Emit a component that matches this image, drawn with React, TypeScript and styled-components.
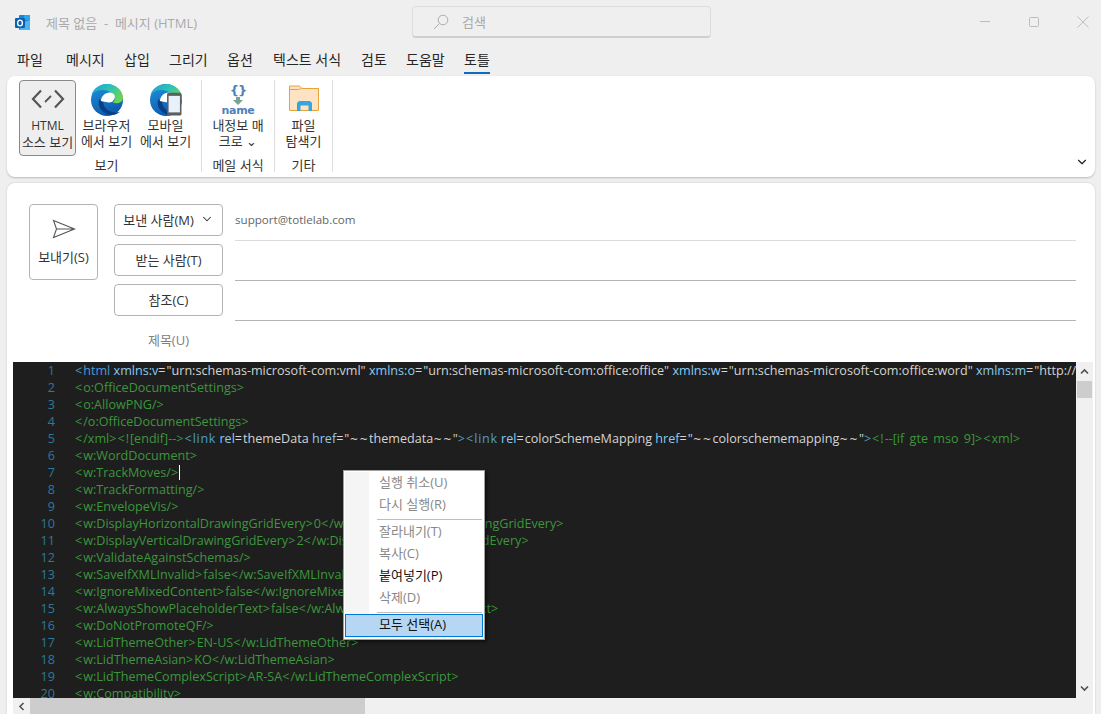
import React from 'react'
import styled, { createGlobalStyle } from 'styled-components'
import { ChevronDown } from 'lucide-react'

const GlobalStyle = createGlobalStyle`
    html, body {
        margin: 0;
        padding: 0;
        height: 100%;
        overflow: hidden;
    }
    * {
        box-sizing: border-box;
    }
`

const uiFont = `"Open Sans", "Noto Sans CJK KR", sans-serif`

const Page = styled.div`
    width: 1101px;
    height: 714px;
    background: #efefef;
    overflow: hidden;
    font-family: ${uiFont};
    font-size: 13px;
    color: #333;
    display: flex;
    flex-direction: column;
`

const TitleBar = styled.div`
    height: 44px;
    flex: none;
    display: grid;
    grid-template-columns: 397px 299px 1fr;
    padding-left: 15px;
    align-items: center;
`

const TitleLeft = styled.div`
    display: flex;
    align-items: center;
    gap: 15px;
    color: #aaa;
    font-size: 13px;
`

const SearchBox = styled.div`
    height: 32px;
    border: 1px solid #dcdcdc;
    border-bottom: 2px solid #cfcfcf;
    border-radius: 4px;
    display: flex;
    align-items: center;
    gap: 13px;
    padding-left: 20px;
    color: #aaa;
    font-size: 13px;
`

const WindowControls = styled.div`
    display: flex;
    justify-content: flex-end;
    gap: 37px;
    padding-right: 12px;
`

const TabBar = styled.div`
    height: 32px;
    flex: none;
    display: flex;
    padding-left: 17px;
    align-items: flex-start;
    padding-top: 6px;
    font-size: 14px;
`

const Tab = styled.div<{ $width: number; $active?: boolean }>`
    width: ${props => props.$width}px;
    flex: none;
    white-space: nowrap;
    color: #262626;

    & span {
        display: inline-block;
        height: 24px;
        line-height: 19px;
        border-bottom: ${props => props.$active ? '2px solid #0f6cbd' : 'none'};
    }
`

const Ribbon = styled.div`
    height: 101px;
    flex: none;
    margin: 0 6px 0 7px;
    background: #fff;
    border-radius: 8px;
    box-shadow: 0 1px 2px rgba(0, 0, 0, .22);
    display: flex;
    padding: 4px 6px 5px 5px;
`

const RibbonGroup = styled.div<{ $width: number }>`
    width: ${props => props.$width}px;
    flex: none;
    border-right: 1px solid #dedede;
    display: flex;
    flex-direction: column;
    align-items: center;
`

const GroupButtons = styled.div`
    display: flex;
    gap: 2px;
    height: 76px;
`

const GroupLabel = styled.div`
    font-size: 13px;
    line-height: 17px;
    margin-top: 1px;
    color: #333;
`

const RibbonButton = styled.div<{ $pressed?: boolean }>`
    width: 57px;
    height: 76px;
    border-radius: 4px;
    border: 1px solid ${props => props.$pressed ? '#8a8a8a' : 'transparent'};
    background: ${props => props.$pressed ? '#eeeeee' : 'transparent'};
    display: flex;
    flex-direction: column;
    align-items: center;
    padding-top: 3px;
`

const IconSlot = styled.div`
    height: 32px;
    display: flex;
    align-items: center;
    justify-content: center;
`

const RibbonText = styled.div`
    font-size: 13px;
    line-height: 16px;
    margin-top: 1px;
    text-align: center;
    white-space: nowrap;
    color: #333;
`

const LatinLabel = styled.span`
    font-size: 12px;
`

const NameIcon = styled.div`
    display: flex;
    flex-direction: column;
    align-items: center;
    color: #4f81bd;
    font-family: "DejaVu Sans", sans-serif;
    font-weight: bold;
    line-height: 1;
`

const Braces = styled.span`
    font-size: 13px;
    height: 13px;
    letter-spacing: -1px;
`

const NameText = styled.span`
    font-size: 11px;
    height: 11px;
    letter-spacing: -.3px;
`

const CollapseButton = styled.div`
    margin-left: auto;
    align-self: flex-end;
    margin-bottom: 3px;
    color: #222;
    display: flex;
`

const Card = styled.div`
    flex: 1;
    min-height: 0;
    margin: 6px 6px 0 7px;
    background: #fff;
    border-radius: 8px 8px 0 0;
    box-shadow: 0 0 2px rgba(0, 0, 0, .18);
    display: flex;
    flex-direction: column;
`

const Compose = styled.div`
    height: 179px;
    flex: none;
    display: flex;
    padding: 21px 19px 0 22px;
`

const SendButton = styled.div`
    width: 69px;
    height: 76px;
    flex: none;
    border: 1px solid #b4b4b4;
    border-radius: 4px;
    display: flex;
    flex-direction: column;
    align-items: center;
    padding-top: 14px;
    gap: 8px;
    margin-right: 16px;
`

const Fields = styled.div`
    flex: 1;
    display: flex;
    flex-direction: column;
    gap: 3px;
`

const FieldRow = styled.div`
    display: flex;
    height: 37px;
    flex: none;
    gap: 12px;
`

const AddressButton = styled.div`
    width: 109px;
    height: 32px;
    flex: none;
    border: 1px solid #b4b4b4;
    border-radius: 4px;
    display: flex;
    align-items: center;
    justify-content: center;
    gap: 6px;
    padding-bottom: 2px;
    color: #333;
`

const SubjectLabel = styled.div`
    width: 109px;
    height: 32px;
    flex: none;
    display: flex;
    align-items: center;
    justify-content: center;
    padding-bottom: 2px;
    color: #808080;
`

const AddressInput = styled.div<{ $strong?: boolean }>`
    flex: 1;
    border-bottom: 1px solid ${props => props.$strong ? '#b4b4b4' : '#dcdcdc'};
    font-size: 11.6px;
    line-height: 31px;
    color: #666;
`

const EditorFrame = styled.div`
    flex: 1;
    min-height: 0;
    margin: 0 2px 0 6px;
    display: grid;
    grid-template-columns: 1fr 17px;
    grid-template-rows: 1fr 16px;
    position: relative;
    overflow: hidden;
`

const Editor = styled.div`
    background: #1e1e1e;
    overflow: hidden;
    font-family: "Open Sans", sans-serif;
    font-size: 12.6px;
    min-width: 0;
`

const CodeLine = styled.div`
    display: flex;
    height: 17px;
    line-height: 17px;
    white-space: pre;
`

const LineNo = styled.div`
    width: 42px;
    flex: none;
    margin-right: 20px;
    text-align: right;
    color: #2b7a9b;
`

const tokenColors = {
    green: '#3c963c',
    bracket: '#569cb4',
    tag: '#4b9bd6',
    link: '#4b9bd6',
    attr: '#8ccbf0',
    text: '#d4d4d4',
}

const Token = styled.span<{ $kind: keyof typeof tokenColors }>`
    color: ${props => tokenColors[props.$kind]};
    letter-spacing: ${props => props.$kind === 'link' ? '.7px' : 'normal'};
    word-spacing: ${props => props.$kind === 'green' ? '2px' : 'normal'};
`

const Sym = styled.span`
    letter-spacing: 1px;
`

const Tilde = styled.span`
    font-family: "DejaVu Sans", sans-serif;
    font-size: 10.5px;
    letter-spacing: 1px;
`

const Caret = styled.span`
    display: inline-block;
    width: 1px;
    height: 15px;
    background: #fff;
    margin-top: 1px;
    vertical-align: top;
`

const VScroll = styled.div`
    background: #f0f0f0;
    display: flex;
    flex-direction: column;
    align-items: center;
    color: #505050;
    padding-top: 2px;
`

const VThumb = styled.div`
    width: 15px;
    height: 17px;
    margin-top: 3px;
    background: #cdcdcd;
`

const ArrowSlot = styled.div`
    height: 14px;
    display: flex;
    align-items: center;
    justify-content: center;
`

const VEnd = styled.div`
    margin-top: auto;
    padding-bottom: 2px;
`

const HScroll = styled.div`
    background: #f0f0f0;
    display: flex;
    align-items: center;
    color: #505050;
    grid-column: 1 / 3;
`

const HArrow = styled.div`
    width: 17px;
    display: flex;
    justify-content: center;
`

const HThumb = styled.div`
    width: 335px;
    height: 16px;
    background: #cdcdcd;
`

const Menu = styled.div`
    position: absolute;
    left: 330px;
    top: 108px;
    width: 142px;
    height: 170px;
    background: #fff;
    border: 1px solid #a0a0a0;
    box-shadow: 2px 2px 3px rgba(0, 0, 0, .5);
    padding: 1px;
    display: flex;
    flex-direction: column;
    background-image: linear-gradient(to right, #f5f5f5 24px, #fff 24px);
    background-origin: content-box;
    background-repeat: no-repeat;
`

const MenuItem = styled.div<{ $state?: 'disabled' | 'active' | 'selected' }>`
    height: ${props => props.$state === 'selected' ? '23px' : '22px'};
    line-height: ${props => props.$state === 'selected' ? '21px' : '20px'};
    flex: none;
    padding-left: 34px;
    color: ${props => props.$state === 'disabled' ? '#888' : '#111'};
    background: ${props => props.$state === 'selected' ? '#b5d7f3' : 'transparent'};
    outline: ${props => props.$state === 'selected' ? '1px solid #0078d4' : 'none'};
    outline-offset: -1px;
`

const MenuSep = styled.div<{ $after: number }>`
    height: 1px;
    flex: none;
    background: #bdbdbd;
    margin: 3px 1px ${props => props.$after}px 32px;
`

type Segment = { kind: keyof typeof tokenColors; text: string }

const green = (text: string): Segment[] => [{ kind: 'green', text }]

const attr = (name: string, value: string): Segment[] => [
    { kind: 'attr', text: ' ' + name },
    { kind: 'text', text: '=' + value },
]

const codeLines: Segment[][] = [
    [
        { kind: 'bracket', text: '<' },
        { kind: 'tag', text: 'html' },
        ...attr('xmlns:v', '"urn:schemas-microsoft-com:vml"'),
        ...attr('xmlns:o', '"urn:schemas-microsoft-com:office:office"'),
        ...attr('xmlns:w', '"urn:schemas-microsoft-com:office:word"'),
        ...attr('xmlns:m', '"http://'),
    ],
    green('<o:OfficeDocumentSettings>'),
    green('<o:AllowPNG/>'),
    green('</o:OfficeDocumentSettings>'),
    [
        { kind: 'green', text: '</xml><![endif]-->' },
        { kind: 'bracket', text: '<' },
        { kind: 'link', text: 'link' },
        ...attr('rel', 'themeData'),
        ...attr('href', '"~~themedata~~"'),
        { kind: 'bracket', text: '><' },
        { kind: 'link', text: 'link' },
        ...attr('rel', 'colorSchemeMapping'),
        ...attr('href', '"~~colorschememapping~~"'),
        { kind: 'bracket', text: '>' },
        { kind: 'green', text: '<!--[if gte mso 9]><xml>' },
    ],
    green('<w:WordDocument>'),
    green('<w:TrackMoves/>'),
    green('<w:TrackFormatting/>'),
    green('<w:EnvelopeVis/>'),
    green('<w:DisplayHorizontalDrawingGridEvery>0</w:DisplayHorizontalDrawingGridEvery>'),
    green('<w:DisplayVerticalDrawingGridEvery>2</w:DisplayVerticalDrawingGridEvery>'),
    green('<w:ValidateAgainstSchemas/>'),
    green('<w:SaveIfXMLInvalid>false</w:SaveIfXMLInvalid>'),
    green('<w:IgnoreMixedContent>false</w:IgnoreMixedContent>'),
    green('<w:AlwaysShowPlaceholderText>false</w:AlwaysShowPlaceholderText>'),
    green('<w:DoNotPromoteQF/>'),
    green('<w:LidThemeOther>EN-US</w:LidThemeOther>'),
    green('<w:LidThemeAsian>KO</w:LidThemeAsian>'),
    green('<w:LidThemeComplexScript>AR-SA</w:LidThemeComplexScript>'),
    green('<w:Compatibility>'),
]

const tabs: { label: string; width: number; active?: boolean }[] = [
    { label: '파일', width: 49 },
    { label: '메시지', width: 58 },
    { label: '삽입', width: 45 },
    { label: '그리기', width: 58 },
    { label: '옵션', width: 46 },
    { label: '텍스트 서식', width: 88 },
    { label: '검토', width: 45 },
    { label: '도움말', width: 58 },
    { label: '토틀', width: 40, active: true },
]

const OutlookLogo = () => (
    <svg width="16" height="17" viewBox="0 0 16 17">
        <rect x="4" y="1" width="11" height="15" rx="1" fill="#1a86d9" />
        <rect x="9" y="1" width="6" height="5" fill="#28a8ea" />
        <path d="M6 9l9-3v9a1 1 0 0 1-1 1H5z" fill="#50b5ee" />
        <rect x="0" y="4" width="10" height="10" rx="1" fill="#0f5fb0" />
        <ellipse cx="5" cy="9" rx="2.4" ry="2.9" fill="none" stroke="#fff" strokeWidth="1.4" />
    </svg>
)

const SearchIcon = () => (
    <svg width="16" height="16" viewBox="0 0 16 16" fill="none" stroke="#adadad" strokeWidth="1">
        <circle cx="10" cy="6" r="4.8" />
        <path d="M6.5 9.5L1 15" />
    </svg>
)

const MinimizeIcon = () => (
    <svg width="12" height="12" viewBox="0 0 12 12" stroke="#bdbdbd" fill="none">
        <path d="M1 5.5h10" />
    </svg>
)

const MaximizeIcon = () => (
    <svg width="12" height="12" viewBox="0 0 12 12" stroke="#bdbdbd" fill="none">
        <rect x="1.5" y="1.5" width="9" height="9" rx="1" />
    </svg>
)

const CloseIcon = () => (
    <svg width="12" height="12" viewBox="0 0 12 12" stroke="#bdbdbd" fill="none">
        <path d="M.5 .5l11 11M11.5 .5l-11 11" />
    </svg>
)

const CodeIcon = () => (
    <svg width="34" height="24" viewBox="0 1 34 24" fill="none" stroke="#555" strokeWidth="2.2">
        <path d="M10 3.500L2 12l8 8.500M24 3.500l8 8.500-8 8.500" />
        <path d="M20 9l-6 6" strokeWidth="1.8" />
    </svg>
)

const EdgeLogo = ({ id, phone }: { id: string; phone?: boolean }) => (
    <svg width="32" height="32" viewBox="1.5 .5 31 31">
        <defs>
            <linearGradient id={id + 'a'} x1="0" y1="0" x2="1" y2=".6">
                <stop offset="0" stopColor="#1f9fd8" />
                <stop offset=".55" stopColor="#2fc4b0" />
                <stop offset="1" stopColor="#6ed34f" />
            </linearGradient>
            <linearGradient id={id + 'b'} x1="0" y1="0" x2=".4" y2="1">
                <stop offset="0" stopColor="#1f93de" />
                <stop offset="1" stopColor="#0d5cab" />
            </linearGradient>
        </defs>
        <circle cx="17" cy="16" r="15.5" fill={`url(#${id}b)`} />
        <path d="M17 .5C10 .5 4 4.5 2 11c3-4 8-5.500 13-4.500 6 1 9 4 9.500 7.500.3 2-1 3.500-2 4.500 4 1.500 10 .5 10-4.500C32.500 7 25.500 .5 17 .5z" fill={`url(#${id}a)`} />
        <path d="M11 18c0-6 5-10 10-9 3 .7 4 3 3.500 5-.5 1.500-2 3-2.500 4-1 0-3.500 1-6 0-2-.7-4-1-5 0z" fill="#fff" />
        <path d="M9.500 15c-2.500 7 3 15 11.500 15.500 4 .2 6.500-1 8.500-3-4 1-8.500 .5-11.500-1.500-3-2-5-5.500-4.500-8-1.500-.5-3-1.500-4-3z" fill="#0a3f87" />
        {phone && (
            <>
                <rect x="18" y="9" width="14" height="22" rx="1.500" fill="#5e5e5e" />
                <rect x="19.500" y="12" width="11" height="16" fill="#e6f1fb" />
            </>
        )}
    </svg>
)

const FolderIcon = () => (
    <svg width="30" height="32" viewBox="0 -1 30 32">
        <path d="M.5 1h10l2.500 2.500H29.500V25.500H.5z" fill="#fde3c4" stroke="#e9a23b" />
        <path d="M.5 4.500h9l3-1" fill="none" stroke="#e9a23b" />
        <path d="M8 26v-8l2-2h11l2 2v8h-3.500v-5.500h-8V26z" fill="#35a7dc" />
    </svg>
)

const DownArrow = () => (
    <svg width="12" height="8" viewBox="0 0 12 8">
        <path d="M4 0h4v3h3L6 8 1 3h3z" fill="#7ba395" />
    </svg>
)

const SendIcon = () => (
    <svg width="24" height="20" viewBox="0 0 24 20" fill="none" stroke="#555" strokeWidth="1.1">
        <path d="M1.500 1.500L22.500 10 1.500 18.500 4.500 10zM4.500 10h18" />
    </svg>
)

const ArrowGlyph = ({ rotate }: { rotate: number }) => (
    <svg width="9" height="7" viewBox="0 0 9 7" style={{ transform: `rotate(${rotate}deg)` }}>
        <path d="M1 5.500l3.500-3.500 3.500 3.500" fill="none" stroke="currentColor" strokeWidth="1.600" />
    </svg>
)

// open sans has narrower brackets and tildes than the original font, so those get some extra room
const renderCode = (text: string) =>
    text.split(/(~+|[<>=!]+)/).map((part, i) => {
        if (i % 2 === 0) return part
        return part[0] === '~' ? <Tilde key={i}>{part}</Tilde> : <Sym key={i}>{part}</Sym>
    })

const App: React.FC = () => {
    return (
        <Page>
            <GlobalStyle />
            <TitleBar>
                <TitleLeft>
                    <OutlookLogo />
                    <span>제목 없음 &nbsp;-&nbsp; 메시지 (HTML)</span>
                </TitleLeft>
                <SearchBox>
                    <SearchIcon />
                    검색
                </SearchBox>
                <WindowControls>
                    <MinimizeIcon />
                    <MaximizeIcon />
                    <CloseIcon />
                </WindowControls>
            </TitleBar>

            <TabBar>
                {tabs.map((tab, ind) => (
                    <Tab key={ind} $width={tab.width} $active={tab.active}>
                        <span>{tab.label}</span>
                    </Tab>
                ))}
            </TabBar>

            <Ribbon>
                <RibbonGroup $width={190}>
                    <GroupButtons>
                        <RibbonButton $pressed>
                            <IconSlot><CodeIcon /></IconSlot>
                            <RibbonText><LatinLabel>HTML</LatinLabel><br />소스 보기</RibbonText>
                        </RibbonButton>
                        <RibbonButton>
                            <IconSlot><EdgeLogo id="edge" /></IconSlot>
                            <RibbonText>브라우저<br />에서 보기</RibbonText>
                        </RibbonButton>
                        <RibbonButton>
                            <IconSlot><EdgeLogo id="mobile" phone /></IconSlot>
                            <RibbonText>모바일<br />에서 보기</RibbonText>
                        </RibbonButton>
                    </GroupButtons>
                    <GroupLabel>보기</GroupLabel>
                </RibbonGroup>
                <RibbonGroup $width={73}>
                    <GroupButtons>
                        <RibbonButton>
                            <IconSlot>
                                <NameIcon>
                                    <Braces>{'{}'}</Braces>
                                    <DownArrow />
                                    <NameText>name</NameText>
                                </NameIcon>
                            </IconSlot>
                            <RibbonText>내정보 매<br />크로 ⌄</RibbonText>
                        </RibbonButton>
                    </GroupButtons>
                    <GroupLabel>메일 서식</GroupLabel>
                </RibbonGroup>
                <RibbonGroup $width={58}>
                    <GroupButtons>
                        <RibbonButton>
                            <IconSlot><FolderIcon /></IconSlot>
                            <RibbonText>파일<br />탐색기</RibbonText>
                        </RibbonButton>
                    </GroupButtons>
                    <GroupLabel>기타</GroupLabel>
                </RibbonGroup>
                <CollapseButton><ChevronDown size={14} strokeWidth={2} /></CollapseButton>
            </Ribbon>

            <Card>
                <Compose>
                    <SendButton>
                        <SendIcon />
                        보내기(S)
                    </SendButton>
                    <Fields>
                        <FieldRow>
                            <AddressButton>
                                보낸 사람(M)
                                <ChevronDown size={14} strokeWidth={1.8} />
                            </AddressButton>
                            <AddressInput>support@totlelab.com</AddressInput>
                        </FieldRow>
                        <FieldRow>
                            <AddressButton>받는 사람(T)</AddressButton>
                            <AddressInput $strong />
                        </FieldRow>
                        <FieldRow>
                            <AddressButton>참조(C)</AddressButton>
                            <AddressInput $strong />
                        </FieldRow>
                        <FieldRow>
                            <SubjectLabel>제목(U)</SubjectLabel>
                        </FieldRow>
                    </Fields>
                </Compose>

                <EditorFrame>
                    <Editor>
                        {codeLines.map((segments, ind) => (
                            <CodeLine key={ind}>
                                <LineNo>{ind + 1}</LineNo>
                                <div>
                                    {segments.map((seg, i) => (
                                        <Token key={i} $kind={seg.kind}>{renderCode(seg.text)}</Token>
                                    ))}
                                    {ind === 6 && <Caret />}
                                </div>
                            </CodeLine>
                        ))}
                    </Editor>
                    <VScroll>
                        <ArrowSlot><ArrowGlyph rotate={0} /></ArrowSlot>
                        <VThumb />
                        <VEnd><ArrowGlyph rotate={180} /></VEnd>
                    </VScroll>
                    <HScroll>
                        <HArrow><ArrowGlyph rotate={-90} /></HArrow>
                        <HThumb />
                    </HScroll>

                    <Menu>
                        <MenuItem $state="disabled">실행 취소(U)</MenuItem>
                        <MenuItem $state="disabled">다시 실행(R)</MenuItem>
                        <MenuSep $after={1} />
                        <MenuItem $state="disabled">잘라내기(T)</MenuItem>
                        <MenuItem $state="disabled">복사(C)</MenuItem>
                        <MenuItem $state="active">붙여넣기(P)</MenuItem>
                        <MenuItem $state="disabled">삭제(D)</MenuItem>
                        <MenuSep $after={1} />
                        <MenuItem $state="selected">모두 선택(A)</MenuItem>
                    </Menu>
                </EditorFrame>
            </Card>
        </Page>
    )
}

export default App
